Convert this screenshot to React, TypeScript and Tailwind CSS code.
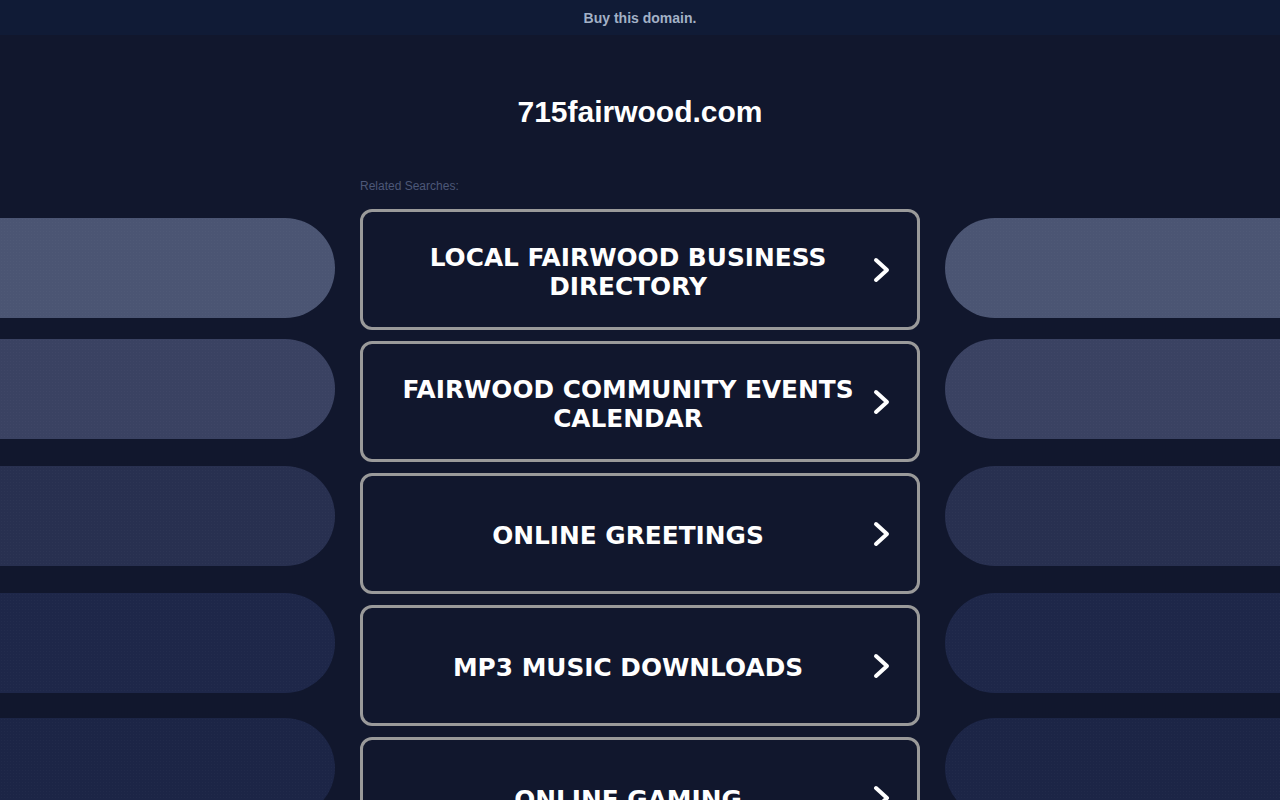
import React from "react";

const pills = [
  { color: "bg-[#4b5573]", mt: "mt-0" },
  { color: "bg-[#3a4262]", mt: "mt-[21px]" },
  { color: "bg-[#283050]", mt: "mt-[27px]" },
  { color: "bg-[#1e2749]", mt: "mt-[27px]" },
  { color: "bg-[#1c2546]", mt: "mt-[25px]" },
];

const items = [
  "LOCAL FAIRWOOD BUSINESS DIRECTORY",
  "FAIRWOOD COMMUNITY EVENTS CALENDAR",
  "ONLINE GREETINGS",
  "MP3 MUSIC DOWNLOADS",
  "ONLINE GAMING",
];

function Chevron() {
  return (
    <svg width="17" height="26" viewBox="0 0 17 26" fill="none" className="shrink-0">
      <polyline
        points="3,3 14,13 3,23"
        stroke="#ffffff"
        strokeWidth="4"
        strokeLinecap="round"
        strokeLinejoin="round"
      />
    </svg>
  );
}

function Pills({ side }: { side: "left" | "right" }) {
  return (
    <div className="w-[335px] shrink-0 pt-[183px] flex flex-col">
      {pills.map((p, i) => (
        <div
          key={i}
          className={`${p.mt} h-[100px] ${p.color} ${
            side === "left" ? "rounded-r-[50px]" : "rounded-l-[50px]"
          } bg-[radial-gradient(rgba(255,255,255,0.025)_0.6px,transparent_0.8px)] bg-[length:3px_3px]`}
        />
      ))}
    </div>
  );
}

export default function App() {
  return (
    <div
      className="h-[800px] w-full overflow-hidden bg-[#11172d]"
      style={{ fontFamily: "Arial, 'Liberation Sans', sans-serif" }}
    >
      <div className="h-[35px] bg-[#101b36] flex items-center justify-center pt-[2px]">
        <span className="text-[14px] font-bold text-[#a3b1c6]">Buy this domain.</span>
      </div>
      <div className="flex gap-[25px]">
        <Pills side="left" />
        <div className="w-[560px] shrink-0 pt-[58px]">
          <h1 className="text-[30px] leading-[37px] font-bold text-white text-center">
            715fairwood.com
          </h1>
          <p className="mt-[49px] text-[12px] leading-[14px] text-[#4d5878]">Related Searches:</p>
          <div className="mt-[16px] flex flex-col gap-[11px]">
            {items.map((t) => (
              <div
                key={t}
                className="h-[121px] border-[3px] border-[#9a9a9a] rounded-[12px] flex items-center pl-[20px] pr-[27px]"
              >
                <span
                  className="flex-1 text-center text-white font-bold text-[24.8px] leading-[29px] pt-[4px]"
                  style={{ fontFamily: "'DejaVu Sans', Verdana, sans-serif" }}
                >
                  {t}
                </span>
                <Chevron />
              </div>
            ))}
          </div>
        </div>
        <Pills side="right" />
      </div>
    </div>
  );
}
